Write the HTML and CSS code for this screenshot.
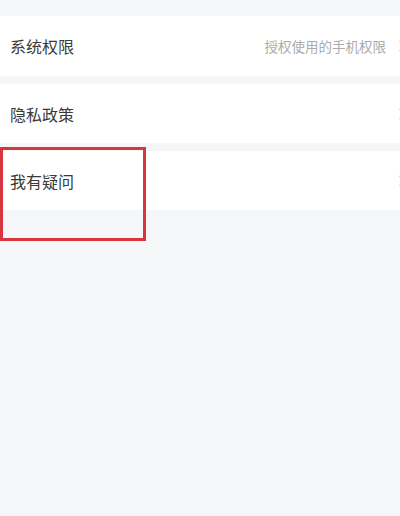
FILE: index.html
```html
<!DOCTYPE html>
<html lang="zh-CN">
<head>
    <meta charset="UTF-8">
    <meta name="viewport" content="width=device-width, initial-scale=1.0">
    <title>设置</title>
    <link rel="stylesheet" href="styles.css">
</head>
<body>
    <div class="page">
        <div class="settings-list">
            <div class="setting-row">
                <span class="setting-label">系统权限</span>
                <span class="setting-hint">授权使用的手机权限</span>
                <svg class="chevron" viewBox="0 0 8 14"><path d="M1 1l6 6-6 6" /></svg>
            </div>
            <div class="setting-row">
                <span class="setting-label">隐私政策</span>
                <svg class="chevron" viewBox="0 0 8 14"><path d="M1 1l6 6-6 6" /></svg>
            </div>
            <div class="setting-row">
                <span class="setting-label">我有疑问</span>
                <svg class="chevron" viewBox="0 0 8 14"><path d="M1 1l6 6-6 6" /></svg>
            </div>
        </div>
        <!-- annotation box drawn over the screenshot -->
        <div class="highlight"></div>
    </div>
</body>
</html>
```

FILE: styles.css
```css
body {
    margin: 0;
    font-family: "Noto Sans CJK SC", "Noto Sans", sans-serif;
    background-color: #f4f6f8;
    color: #333;
    overflow: hidden;
}

.page {
    position: relative;
    width: 400px;
    height: 516px;
    padding-top: 16px;
    box-sizing: border-box;
}

.settings-list {
    display: flex;
    flex-direction: column;
    gap: 8px;
}

.setting-row {
    display: flex;
    align-items: center;
    height: 59px;
    padding-left: 10px;
    background-color: #ffffff;
}

.setting-row:first-child {
    height: 60px;
}

.setting-label {
    font-size: 16px;
    color: #3a3a3a;
    flex: 1;
}

.setting-hint {
    font-size: 13.5px;
    color: #ababab;
    margin-right: 12px;
}

.chevron {
    width: 7px;
    height: 12px;
    margin-right: -5px;
    flex-shrink: 0;
}

.chevron path {
    fill: none;
    stroke: #dcdcdc;
    stroke-width: 1.5;
}

.highlight {
    position: absolute;
    left: 0;
    top: 147px;
    width: 140px;
    height: 88px;
    border: 3px solid #d8363e;
}
```
